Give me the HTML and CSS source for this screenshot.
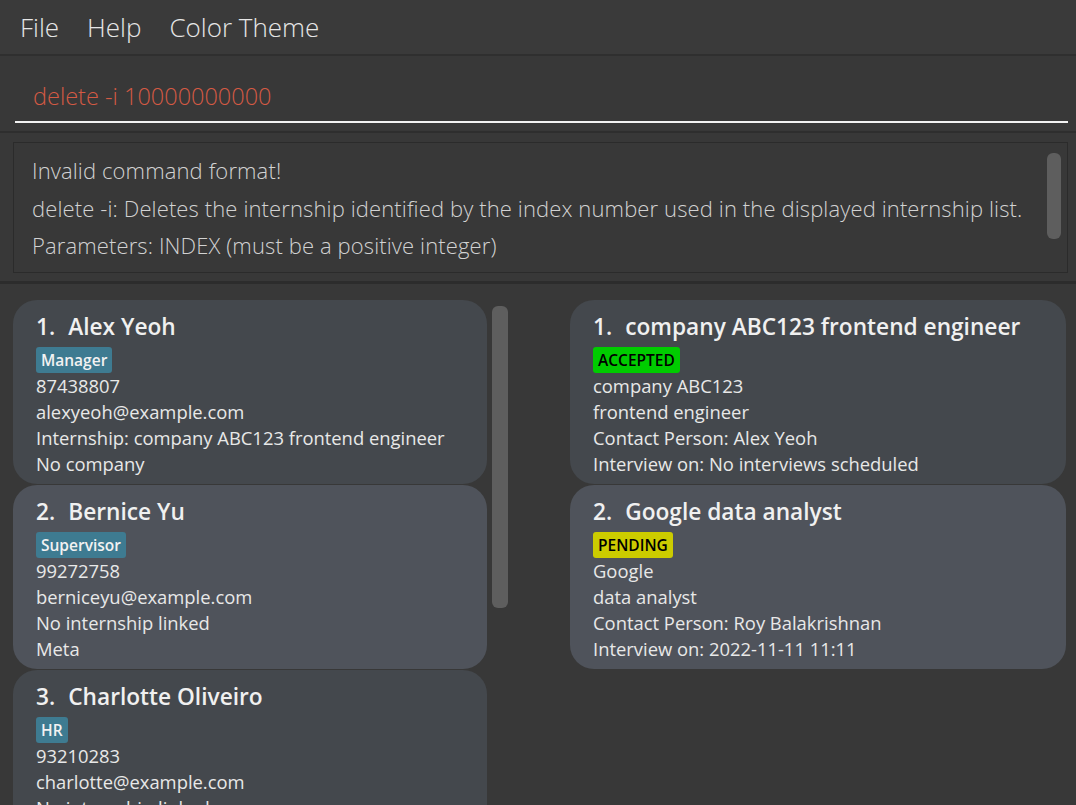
FILE: index.html
```html
<!DOCTYPE html>
<html>
<head>
<meta charset="utf-8">
<link rel="stylesheet" href="styles.css">
</head>
<body>
<div class="app">
  <nav class="menubar">
    <span class="menu-item">File</span>
    <span class="menu-item">Help</span>
    <span class="menu-item">Color Theme</span>
  </nav>
  <section class="command">
    <div class="cmd-input">delete -i 10000000000</div>
  </section>
  <section class="result">
    <div class="result-box">
      <div class="result-text">
        <p>Invalid command format!</p>
        <p>delete -i: Deletes the internship identified by the index number used in the displayed internship list.</p>
        <p>Parameters: INDEX (must be a positive integer)</p>
      </div>
      <div class="result-scroll"><div class="thumb"></div></div>
    </div>
  </section>
  <main class="lists">
    <div class="pane pane-left">
      <div class="cards">
        <div class="card odd">
          <div class="card-title"><span class="idx">1.</span>Alex Yeoh</div>
          <div class="tags"><span class="tag tag-role">Manager</span></div>
          <div class="line">87438807</div>
          <div class="line">alexyeoh@example.com</div>
          <div class="line">Internship: company ABC123 frontend engineer</div>
          <div class="line">No company</div>
        </div>
        <div class="card even">
          <div class="card-title"><span class="idx">2.</span>Bernice Yu</div>
          <div class="tags"><span class="tag tag-role">Supervisor</span></div>
          <div class="line">99272758</div>
          <div class="line">berniceyu@example.com</div>
          <div class="line">No internship linked</div>
          <div class="line">Meta</div>
        </div>
        <div class="card odd">
          <div class="card-title"><span class="idx">3.</span>Charlotte Oliveiro</div>
          <div class="tags"><span class="tag tag-role">HR</span></div>
          <div class="line">93210283</div>
          <div class="line">charlotte@example.com</div>
          <div class="line">No internship linked</div>
          <div class="line">Amazon</div>
        </div>
      </div>
      <div class="list-scroll"><div class="thumb"></div></div>
    </div>
    <div class="pane pane-right">
      <div class="cards">
        <div class="card odd">
          <div class="card-title"><span class="idx">1.</span>company ABC123 frontend engineer</div>
          <div class="tags"><span class="tag tag-accepted">ACCEPTED</span></div>
          <div class="line">company ABC123</div>
          <div class="line">frontend engineer</div>
          <div class="line">Contact Person: Alex Yeoh</div>
          <div class="line">Interview on: No interviews scheduled</div>
        </div>
        <div class="card even">
          <div class="card-title"><span class="idx">2.</span>Google data analyst</div>
          <div class="tags"><span class="tag tag-pending">PENDING</span></div>
          <div class="line">Google</div>
          <div class="line">data analyst</div>
          <div class="line">Contact Person: Roy Balakrishnan</div>
          <div class="line">Interview on: 2022-11-11 11:11</div>
        </div>
      </div>
    </div>
  </main>
</div>
</body>
</html>
```

FILE: styles.css
```css
html, body {
  margin: 0;
  padding: 0;
  background: #383838;
  overflow: hidden;
}
.app {
  width: 1076px;
  height: 805px;
  display: flex;
  flex-direction: column;
  font-family: "Open Sans", "Noto Sans", sans-serif;
  overflow: hidden;
}
.menubar {
  height: 56px;
  flex: none;
  box-sizing: border-box;
  display: flex;
  align-items: center;
  gap: 28px;
  padding: 0 0 0 20px;
  background: #3a3a3a;
  border-bottom: 2px solid #2f2f2f;
}
.menu-item {
  font-size: 26px;
  font-weight: 300;
  color: #e6e6e6;
}
.command {
  height: 77px;
  flex: none;
  box-sizing: border-box;
  padding: 0 8px 0 15px;
  background: #383838;
  border-bottom: 2px solid #2e2e2e;
}
.cmd-input {
  height: 67px;
  box-sizing: border-box;
  border-bottom: 2px solid #f2f2f2;
  padding: 24px 0 0 18px;
  font-size: 23.5px;
  font-weight: 300;
  color: #d45a44;
}
.result {
  height: 151px;
  flex: none;
  box-sizing: border-box;
  padding: 9px 8px 8px 13px;
  background: #383838;
  border-bottom: 3px solid #2c2c2c;
}
.result-box {
  height: 131px;
  box-sizing: border-box;
  border: 1px solid #2b2b2b;
  display: flex;
  background: #383838;
}
.result-text {
  flex: 1;
  padding: 9px 0 0 18px;
}
.result-text p {
  margin: 0;
  font-size: 22px;
  font-weight: 300;
  letter-spacing: 0.12px;
  line-height: 37.5px;
  color: #d2d2d2;
  white-space: nowrap;
}
.result-scroll {
  width: 20px;
  padding-top: 10px;
}
.result-scroll .thumb {
  width: 14px;
  height: 86px;
  border-radius: 6px;
  background: #5e5e5e;
}
.lists {
  flex: 1;
  display: flex;
  min-height: 0;
}
.pane {
  display: flex;
  min-height: 0;
}
.pane-left {
  width: 512px;
  padding: 16px 0 0 13px;
  box-sizing: border-box;
}
.pane-left .cards {
  width: 474px;
}
.list-scroll {
  padding: 6px 0 0 5px;
}
.list-scroll .thumb {
  width: 16px;
  height: 302px;
  border-radius: 6px;
  background: #5e5e5e;
}
.pane-right {
  flex: 1;
  padding: 16px 10px 0 58px;
}
.pane-right .cards {
  width: 496px;
}
.cards {
  display: flex;
  flex-direction: column;
  gap: 1px;
}
.card {
  height: 184px;
  box-sizing: border-box;
  border-radius: 24px;
  padding: 12px 10px 0 23px;
  color: #ededed;
  flex: none;
}
.card.odd { background: #44484d; }
.card.even { background: #4f535b; }
.card-title {
  font-size: 22.7px;
  font-weight: 600;
  line-height: 30px;
  color: #f0f0f0;
  white-space: nowrap;
}
.idx {
  display: inline-block;
  margin-right: 13px;
}
.tags {
  height: 26px;
  padding-top: 5px;
  display: flex;
  align-items: center;
}
.tag {
  font-size: 15.5px;
  font-weight: 600;
  line-height: 26px;
  padding: 0 5px;
  border-radius: 3px;
}
.tag-role { background: #3e7b91; color: #f2f2f2; }
.tag-accepted { background: #00cc00; color: #000; }
.tag-pending { background: #cccc00; color: #000; }
.line {
  font-size: 18.4px;
  line-height: 26px;
  white-space: nowrap;
  color: #e8e8e8;
}
```
